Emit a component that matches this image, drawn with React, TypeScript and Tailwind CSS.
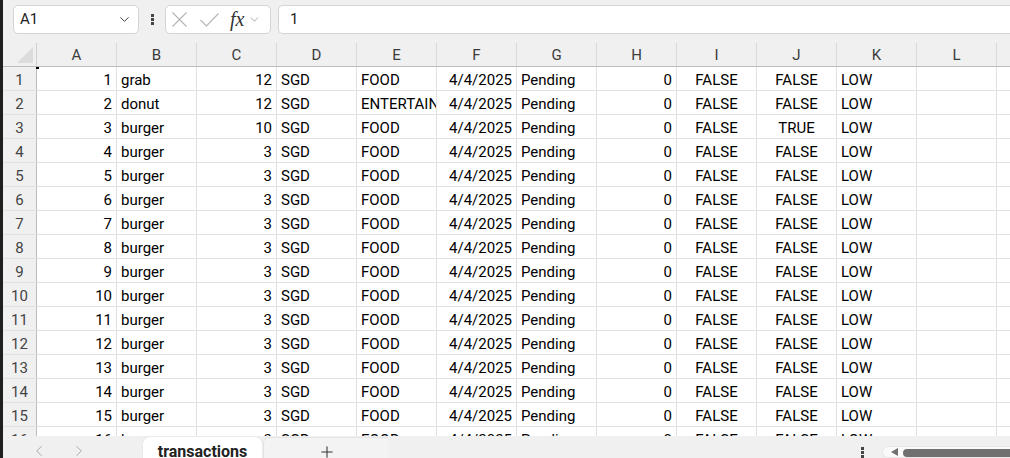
import { ChevronDown, ChevronLeft, ChevronRight, Plus } from "lucide-react";

type Row = {
  name: string;
  amount: number;
  category: string;
  flag: string;
};

const rows: Row[] = Array.from({ length: 16 }, (_, i) => {
  if (i === 0) return { name: "grab", amount: 12, category: "FOOD", flag: "FALSE" };
  if (i === 1) return { name: "donut", amount: 12, category: "ENTERTAINMENT", flag: "FALSE" };
  if (i === 2) return { name: "burger", amount: 10, category: "FOOD", flag: "TRUE" };
  return { name: "burger", amount: 3, category: "FOOD", flag: "FALSE" };
});

const columns = ["A", "B", "C", "D", "E", "F", "G", "H", "I", "J", "K", "L", "M"];

function Cell({ children, align = "left" }: { children?: React.ReactNode; align?: "left" | "right" | "center" }) {
  const a =
    align === "right" ? "justify-end pr-[4px]" : align === "center" ? "justify-center" : "justify-start pl-[4px]";
  return (
    <div
      className={`w-[80px] shrink-0 h-full border-r border-[#e1e1e1] flex items-center pt-[3px] overflow-hidden whitespace-nowrap ${a}`}
    >
      {children}
    </div>
  );
}

function TopBar() {
  return (
    <div className="h-[40px] shrink-0 flex items-start pt-[5px] pl-[10px] gap-0">
      <div className="w-[126px] h-[29px] bg-white border border-[#d4d4d4] rounded-[5px] flex items-center justify-between pl-[6px] pr-[6px]">
        <span className="text-[15px] text-[#222]">A1</span>
        <ChevronDown size={15} strokeWidth={1.5} className="text-[#333]" />
      </div>
      <div className="w-[26px] h-[29px] flex flex-col items-center justify-center gap-[1px]">
        <span className="w-[3px] h-[3px] bg-[#444]" />
        <span className="w-[3px] h-[3px] bg-[#444]" />
        <span className="w-[3px] h-[3px] bg-[#444]" />
      </div>
      <div className="w-[106px] h-[29px] bg-white border border-[#d4d4d4] rounded-[5px] flex items-center pl-[6px] pr-[2px]">
        <svg width="15" height="15" viewBox="0 0 15 15" className="text-[#b4b4b4]">
          <path d="M0.5 0.5 L14.5 14.5 M14.5 0.5 L0.5 14.5" stroke="currentColor" strokeWidth="1.1" fill="none" />
        </svg>
        <svg width="19" height="14" viewBox="0 0 19 14" className="text-[#b4b4b4] ml-[13px]">
          <path d="M0.5 7 L6.5 13 L18.5 0.5" stroke="currentColor" strokeWidth="1.1" fill="none" />
        </svg>
        <span
          className="ml-[11px] text-[20px] italic text-[#333] leading-none pb-[2px]"
          style={{ fontFamily: '"Liberation Serif", serif' }}
        >
          fx
        </span>
        <ChevronDown size={13} strokeWidth={1.3} className="text-[#888] ml-[4px]" />
      </div>
      <div className="ml-[7px] flex-1 h-[29px] bg-white border border-r-0 border-[#d4d4d4] rounded-l-[5px] flex items-center pl-[11px]">
        <span className="text-[15px] text-[#222]">1</span>
      </div>
    </div>
  );
}

function HeaderRow() {
  return (
    <div className="h-[27px] shrink-0 flex items-end border-b border-[#bcbcbc]">
      <div className="w-[34px] shrink-0 h-[23px] border-r border-[#cfcfcf] relative">
        <div
          className="absolute right-[3px] bottom-[3px] w-[16px] h-[16px] bg-[#dcdcdc]"
          style={{ clipPath: "polygon(100% 0, 100% 100%, 0 100%)" }}
        />
      </div>
      {columns.map((c) => (
        <div
          key={c}
          className="w-[80px] shrink-0 h-[23px] border-r border-[#d9d9d9] flex items-center justify-center pt-[2px] text-[15px] text-[#3c3c3c]"
        >
          {c}
        </div>
      ))}
    </div>
  );
}

function Grid() {
  return (
    <div className="flex-1 overflow-hidden relative">
      <div className="absolute left-[33px] top-[-1px] w-[3px] h-[3px] bg-black" />
      {rows.map((r, i) => (
        <div key={i} className="h-[24px] flex border-b border-[#e1e1e1] text-[15px] text-black">
          <div className="w-[34px] shrink-0 h-full border-r border-[#bcbcbc] bg-[#f0f0f0] flex items-center justify-center pt-[3px] text-[#444]">
            {i + 1}
          </div>
          <div className="flex bg-white">
            <Cell align="right">{i + 1}</Cell>
            <Cell>{r.name}</Cell>
            <Cell align="right">{r.amount}</Cell>
            <Cell>SGD</Cell>
            <Cell>{r.category}</Cell>
            <Cell align="right">4/4/2025</Cell>
            <Cell>Pending</Cell>
            <Cell align="right">0</Cell>
            <Cell align="center">FALSE</Cell>
            <Cell align="center">{r.flag}</Cell>
            <Cell>LOW</Cell>
            <Cell />
            <Cell />
          </div>
        </div>
      ))}
    </div>
  );
}

function TabBar() {
  return (
    <div className="h-[22px] shrink-0 flex items-end relative">
      <div className="w-[140px] h-full flex items-center pl-[27px] gap-[22px] pt-[8px] text-[#a8a8a8]">
        <ChevronLeft size={18} strokeWidth={1.3} />
        <ChevronRight size={18} strokeWidth={1.3} />
      </div>
      <div className="w-[119px] h-[21px] bg-white rounded-t-[6px] flex items-center justify-center pt-[9px] shadow-[0_0_1px_rgba(0,0,0,0.25)]">
        <span className="text-[16px] font-bold text-[#222]">transactions</span>
      </div>
      <div className="ml-[1px] w-[125px] h-[21px] rounded-tl-[6px] border-l border-t border-[#e4e4e4] bg-[#f3f3f3] flex items-center pl-[54px] pt-[8px] text-[#333]">
        <Plus size={18} strokeWidth={1.4} />
      </div>
      <div className="flex-1" />
      <div className="flex flex-col gap-[1px] mr-[18px] self-end pt-[10px]">
        <span className="w-[3px] h-[3px] bg-[#444]" />
        <span className="w-[3px] h-[3px] bg-[#444]" />
        <span className="w-[3px] h-[3px] bg-[#444]" />
      </div>
      <div className="w-[128px] h-[12px] bg-[#fafafa] rounded-l-full flex items-end pl-[8px] border border-r-0 border-[#e8e8e8]">
        <div className="w-0 h-0 border-y-[4px] border-y-transparent border-r-[7px] border-r-[#707070] mb-[1px]" />
        <div className="ml-[5px] flex-1 h-[8px] bg-[#707070] rounded-l-full" />
      </div>
    </div>
  );
}

export default function App() {
  return (
    <div
      className="w-[1010px] h-[458px] overflow-hidden flex bg-[#f0f0f0]"
      style={{ fontFamily: "Roboto, 'Liberation Sans', sans-serif" }}
    >
      <div className="w-[3px] shrink-0 h-full bg-[#1f1f1f]" />
      <div className="flex-1 min-w-0 flex flex-col">
        <TopBar />
        <HeaderRow />
        <Grid />
        <TabBar />
      </div>
    </div>
  );
}
